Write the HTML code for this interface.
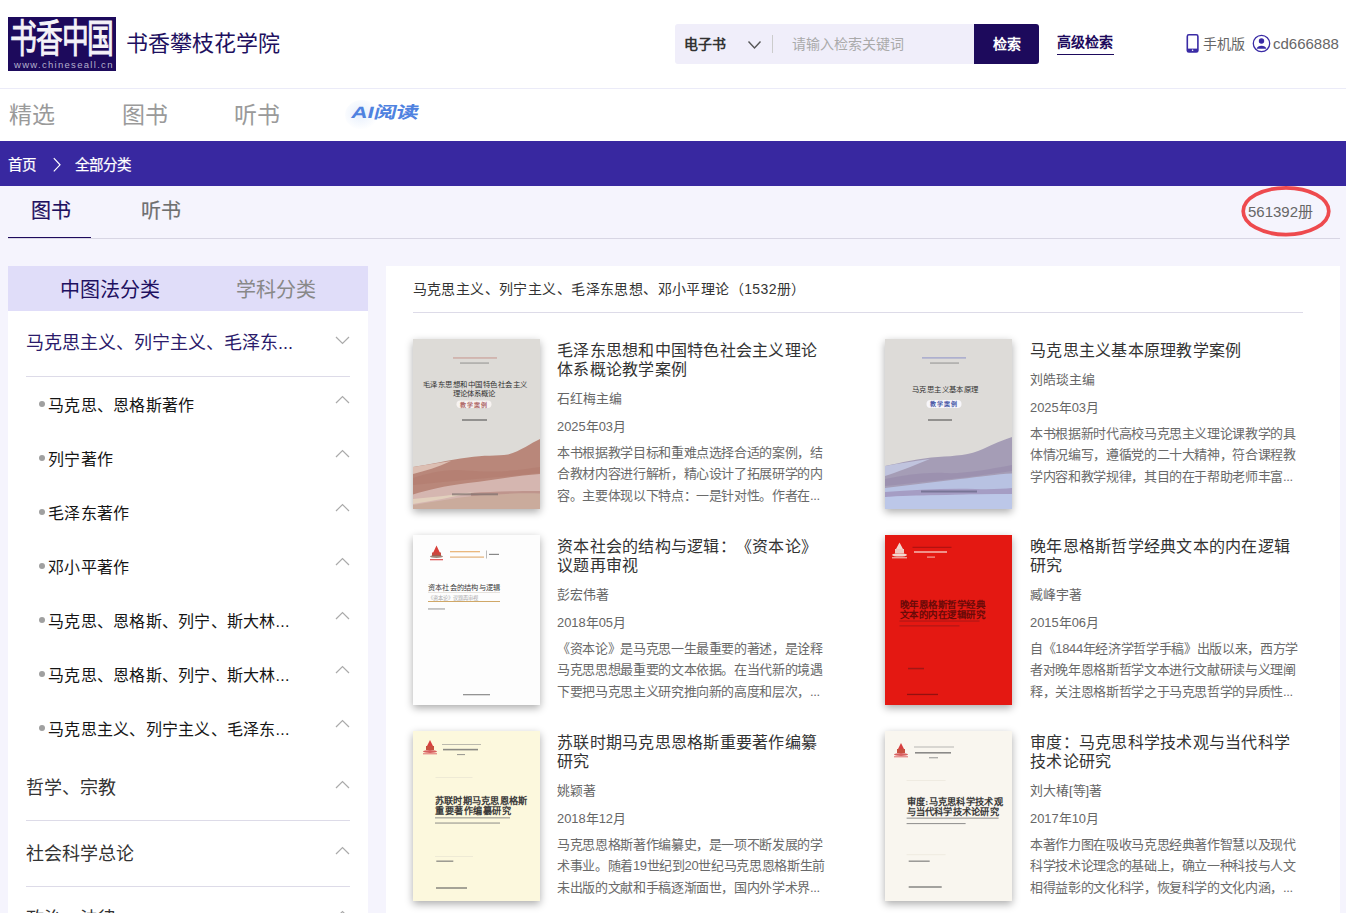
<!DOCTYPE html>
<html lang="zh-CN"><head><meta charset="utf-8">
<style>
*{margin:0;padding:0;box-sizing:border-box}
html,body{width:1346px;height:913px;overflow:hidden}
body{font-family:"Liberation Sans",sans-serif;background:#f5f4fd;position:relative;color:#333;text-spacing-trim:space-all}
.abs{position:absolute}
div{white-space:nowrap}
#hdr{position:absolute;left:0;top:0;width:1346px;height:141px;background:#fff}
#hdrline{position:absolute;left:0;top:88px;width:1346px;height:1px;background:#ebebf8}
#logo{position:absolute;left:8px;top:17px;width:108px;height:54px;background:#1d0a5c;overflow:hidden}
#logo .big{position:absolute;left:2px;top:0px;font-family:"Liberation Serif",serif;font-weight:normal;-webkit-text-stroke:0.7px #f4f2f8;color:#f4f2f8;font-size:26px;line-height:42px;letter-spacing:-1px;transform:translate(0,-7.2px) scale(1.03,1.47);transform-origin:0 0}
#logo .url{position:absolute;left:6px;top:42px;font-size:9.5px;line-height:11px;color:#b4b0cc;letter-spacing:1.3px}
#site{position:absolute;left:126px;top:30px;font-size:22px;line-height:28px;color:#1e1060;font-family:"Liberation Serif",serif}
#search{position:absolute;left:675px;top:24px;width:364px;height:40px;background:#f0eefa;border-radius:3px}
#sbtn{position:absolute;left:974px;top:24px;width:65px;height:40px;background:#1d0a5c;border-radius:0 3px 3px 0;color:#fff;font-size:14px;font-weight:bold;line-height:40px;text-align:center}
.s14{font-size:14px;line-height:18px}
#bar{position:absolute;left:0;top:141px;width:1346px;height:45px;background:#3828a0}
.crumb{position:absolute;top:156px;font-size:14.5px;line-height:18px;color:#fff;-webkit-text-stroke:0.25px #fff}
.nav{position:absolute;top:101px;font-size:23px;line-height:30px;color:#9a9a9a;font-family:"Liberation Serif",serif}
.tab{position:absolute;top:197px;font-size:20px;line-height:26px;font-family:"Liberation Serif",serif}
#side{position:absolute;left:8px;top:266px;width:360px;height:660px;background:#fff}
#sidehead{position:absolute;left:8px;top:266px;width:360px;height:45px;background:#e0ddf9}
#main{position:absolute;left:386px;top:266px;width:954px;height:660px;background:#fff}
.sh{position:absolute;top:277px;font-size:20px;line-height:26px}
.cat{position:absolute;left:26px;font-size:18px;line-height:24px;color:#333}
.sub{position:absolute;left:48px;margin-top:1.5px;font-size:16px;line-height:20px;color:#151515;letter-spacing:0.25px}
.dot{position:absolute;left:39px;width:6px;height:6px;border-radius:50%;background:#a0a0a0}
.chev{position:absolute;left:335px;width:15px;height:9px}
.div1{position:absolute;left:26px;width:324px;height:1px;background:#dddbe8}
.cover{position:absolute;width:127px;height:170px;box-shadow:0 3px 8px rgba(0,0,0,0.33);overflow:hidden}
.bt{position:absolute;font-size:16px;line-height:19px;color:#333;letter-spacing:0.25px}
.ba{position:absolute;font-size:12.9px;line-height:16px;color:#666}
.bd{position:absolute;font-size:13px;line-height:21.4px;color:#6a6a6a;letter-spacing:-0.35px}
</style></head><body>
<div id="hdr"></div>
<div id="hdrline"></div>
<div id="logo"><div class="big">书香中国</div><div class="url">www.chineseall.cn</div></div>
<div id="site">书香攀枝花学院</div>
<div id="search"></div>
<div class="abs s14" style="left:684px;top:35px;font-weight:bold;color:#333">电子书</div>
<svg class="abs" style="left:747px;top:40px" width="15" height="10" viewBox="0 0 15 10"><polyline points="1.5,1.5 7.5,8 13.5,1.5" fill="none" stroke="#555" stroke-width="1.4"/></svg>
<div class="abs" style="left:772px;top:35px;width:1px;height:18px;background:#ccc"></div>
<div class="abs s14" style="left:792px;top:35px;color:#aaa">请输入检索关键词</div>
<div id="sbtn">检索</div>
<div class="abs s14" style="left:1057px;top:33px;font-weight:bold;color:#1d0a5c">高级检索</div>
<div class="abs" style="left:1057px;top:54px;width:57px;height:1.3px;background:#1d0a5c"></div>
<svg class="abs" style="left:1186px;top:33px" width="13" height="21" viewBox="0 0 13 21"><rect x="1.3" y="1.8" width="10.6" height="17.2" rx="1.6" fill="none" stroke="#3a2ba5" stroke-width="1.6"/><rect x="1.3" y="15.6" width="10.6" height="3.4" fill="#3a2ba5"/><circle cx="6.6" cy="17.3" r="0.8" fill="#fff"/></svg>
<div class="abs s14" style="left:1203px;top:35px;color:#666">手机版</div>
<svg class="abs" style="left:1252px;top:34px" width="19" height="19" viewBox="0 0 19 19"><circle cx="9.5" cy="9.5" r="8.2" fill="none" stroke="#3a2ba5" stroke-width="1.3"/><circle cx="9.5" cy="7" r="2.7" fill="#3a2ba5"/><path d="M4.6,14.8 C5.2,10.6 13.8,10.6 14.4,14.8 Z" fill="#3a2ba5"/></svg>
<div class="abs" style="left:1273px;top:34px;font-size:15px;line-height:19px;color:#666">cd666888</div>

<div class="nav" style="left:9px">精选</div>
<div class="nav" style="left:122px">图书</div>
<div class="nav" style="left:234px">听书</div>
<div class="abs" style="left:345px;top:100px;width:34px;height:30px;border-radius:50%;background:radial-gradient(ellipse at 45% 45%,rgba(140,180,240,0.22),rgba(140,180,240,0) 70%)"></div>
<div class="abs" style="left:354px;top:100px;font-size:19px;line-height:24px;font-weight:bold;color:#4f82e0;transform:translate(0,3px) scale(1.19,0.86) skewX(-10deg);transform-origin:0 0">AI阅读</div>

<div id="bar"></div>
<div class="crumb" style="left:8px">首页</div>
<svg class="abs" style="left:52px;top:157px" width="10" height="16" viewBox="0 0 10 16"><polyline points="1.8,1.2 8,7.8 1.8,14.4" fill="none" stroke="#fff" stroke-width="1.2"/></svg>
<div class="crumb" style="left:75px">全部分类</div>

<div class="tab" style="left:31px;top:198px;color:#1e1060;-webkit-text-stroke:0.2px #1e1060">图书</div>
<div class="tab" style="left:141px;top:198px;color:#6f6f6f;-webkit-text-stroke:0.2px #6f6f6f">听书</div>
<div class="abs" style="left:8px;top:236.5px;width:83px;height:1.6px;background:#1e0a5c"></div>
<div class="abs" style="left:8px;top:238px;width:1332px;height:1px;background:#d8d6e4"></div>
<div class="abs" style="left:1248px;top:202px;font-size:15px;line-height:19px;color:#666">561392册</div>
<svg class="abs" style="left:1240px;top:185px" width="93" height="53" viewBox="0 0 93 53"><ellipse cx="46" cy="26.2" rx="42.8" ry="23.4" fill="none" stroke="#ee4a4e" stroke-width="3.7"/></svg>

<div id="side"></div>
<div id="sidehead"></div>
<div class="sh" style="left:60px;color:#1e1060">中图法分类</div>
<div class="sh" style="left:236px;color:#888">学科分类</div>
<div class="cat" style="top:331px;color:#2b1b6b">马克思主义、列宁主义、毛泽东...</div>
<svg class="chev" style="top:336px" width="15" height="9" viewBox="0 0 15 9"><polyline points="1,1 7.5,7.5 14,1" fill="none" stroke="#aaa" stroke-width="1.2"/></svg>
<div class="div1" style="top:376px"></div>
<div class="dot" style="top:401px"></div>
<div class="sub" style="top:394px">马克思、恩格斯著作</div>
<svg class="chev" style="top:395px" width="15" height="9" viewBox="0 0 15 9"><polyline points="1,8 7.5,1.5 14,8" fill="none" stroke="#aaa" stroke-width="1.2"/></svg>
<div class="dot" style="top:455px"></div>
<div class="sub" style="top:448px">列宁著作</div>
<svg class="chev" style="top:449px" width="15" height="9" viewBox="0 0 15 9"><polyline points="1,8 7.5,1.5 14,8" fill="none" stroke="#aaa" stroke-width="1.2"/></svg>
<div class="dot" style="top:509px"></div>
<div class="sub" style="top:502px">毛泽东著作</div>
<svg class="chev" style="top:503px" width="15" height="9" viewBox="0 0 15 9"><polyline points="1,8 7.5,1.5 14,8" fill="none" stroke="#aaa" stroke-width="1.2"/></svg>
<div class="dot" style="top:563px"></div>
<div class="sub" style="top:556px">邓小平著作</div>
<svg class="chev" style="top:557px" width="15" height="9" viewBox="0 0 15 9"><polyline points="1,8 7.5,1.5 14,8" fill="none" stroke="#aaa" stroke-width="1.2"/></svg>
<div class="dot" style="top:617px"></div>
<div class="sub" style="top:610px">马克思、恩格斯、列宁、斯大林...</div>
<svg class="chev" style="top:611px" width="15" height="9" viewBox="0 0 15 9"><polyline points="1,8 7.5,1.5 14,8" fill="none" stroke="#aaa" stroke-width="1.2"/></svg>
<div class="dot" style="top:671px"></div>
<div class="sub" style="top:664px">马克思、恩格斯、列宁、斯大林...</div>
<svg class="chev" style="top:665px" width="15" height="9" viewBox="0 0 15 9"><polyline points="1,8 7.5,1.5 14,8" fill="none" stroke="#aaa" stroke-width="1.2"/></svg>
<div class="dot" style="top:725px"></div>
<div class="sub" style="top:718px">马克思主义、列宁主义、毛泽东...</div>
<svg class="chev" style="top:719px" width="15" height="9" viewBox="0 0 15 9"><polyline points="1,8 7.5,1.5 14,8" fill="none" stroke="#aaa" stroke-width="1.2"/></svg>
<div class="cat" style="top:776px">哲学、宗教</div>
<svg class="chev" style="top:780px" width="15" height="9" viewBox="0 0 15 9"><polyline points="1,8 7.5,1.5 14,8" fill="none" stroke="#aaa" stroke-width="1.2"/></svg>
<div class="div1" style="top:820px"></div>
<div class="cat" style="top:842px">社会科学总论</div>
<svg class="chev" style="top:846px" width="15" height="9" viewBox="0 0 15 9"><polyline points="1,8 7.5,1.5 14,8" fill="none" stroke="#aaa" stroke-width="1.2"/></svg>
<div class="div1" style="top:886px"></div>
<div class="cat" style="top:907px">政治、法律</div>
<svg class="chev" style="top:910px" width="15" height="9" viewBox="0 0 15 9"><polyline points="1,8 7.5,1.5 14,8" fill="none" stroke="#aaa" stroke-width="1.2"/></svg>
<div class="div1" style="top:952px"></div>
<div id="main"></div>
<div class="abs" style="left:412.5px;top:280px;font-size:14px;line-height:18px;color:#333;letter-spacing:0.42px">马克思主义、列宁主义、毛泽东思想、邓小平理论（1532册）</div>
<div class="abs" style="left:413px;top:312px;width:890px;height:1px;background:#dddbe8"></div>
<div class="cover" style="left:413px;top:339px"><svg width="127" height="170" viewBox="0 0 127 170">
<rect width="127" height="170" fill="#dddbd7"/>
<rect x="40" y="18.3" width="44" height="1.3" fill="#c99c94" opacity="0.85"/>
<rect x="47" y="23.5" width="29" height="1.1" fill="#6a6a6a" opacity="0.6"/>
<text x="62" y="47.5" font-size="7.4" text-anchor="middle" fill="#303030" font-family="Liberation Serif" textLength="104">毛泽东思想和中国特色社会主义</text>
<text x="61" y="57.3" font-size="7.4" text-anchor="middle" fill="#303030" font-family="Liberation Serif">理论体系概论</text>
<rect x="43.5" y="61.5" width="35" height="7.5" rx="3.7" fill="#f7f3f1"/>
<text x="61" y="67.6" font-size="6" text-anchor="middle" fill="#b06c6c" font-family="Liberation Sans" font-weight="bold" letter-spacing="1.2">教学案例</text>
<rect x="49" y="80.3" width="25" height="1.4" fill="#444" opacity="0.7"/>
<path d="M0,128 C15,126 35,121 55,118.5 C70,116 85,117 95,115.5 C108,112 118,104 127,100 L127,170 L0,170 Z" fill="#b9877a"/>
<path d="M0,128 L0,135 C12,132 25,128 38,122 C25,124 12,126 0,128 Z" fill="#dcbfb3"/>
<path d="M0,139 C12,135 28,131 42,131 C60,131 75,136 127,128 L127,134 C90,138 60,140 0,146 Z" fill="#b37e70" opacity="0.7"/>
<path d="M0,155.5 C15,151 30,147 55,144 C80,141 100,137 127,135 L127,170 L0,170 Z" fill="#d5b6b0"/>
<path d="M0,160 C20,158 40,156 62,153 C40,158 20,162 0,165 Z" fill="#e2d0bd"/>
<path d="M58,154 C80,152.5 100,152 127,152 L127,156 C100,156 80,156 58,157.5 Z" fill="#bf958d"/>
<path d="M0,166 C20,163 40,159 60,157 C85,155 105,154 127,154.5 L127,170 L0,170 Z" fill="#caab9c"/>
<rect x="39" y="154.3" width="46" height="2" fill="#7d706e" opacity="0.7"/>
</svg></div>
<div class="abs" style="left:557px;top:341px"><div class="bt" style="position:static">毛泽东思想和中国特色社会主义理论<br>体系概论教学案例</div><div class="ba" style="position:static;line-height:28px;margin-top:5.5px">石红梅主编</div><div class="ba" style="position:static;line-height:28px">2025年03月</div><div class="bd" style="position:static;margin-top:1.3px">本书根据教学目标和重难点选择合适的案例，结<br>合教材内容进行解析，精心设计了拓展研学的内<br>容。主要体现以下特点：一是针对性。作者在...</div></div>
<div class="cover" style="left:885px;top:339px"><svg width="127" height="170" viewBox="0 0 127 170">
<rect width="127" height="170" fill="#dddbd8"/>
<rect x="37" y="18.3" width="44" height="1.2" fill="#8a8fc8" opacity="0.8"/>
<rect x="45" y="23.5" width="29" height="1.1" fill="#6a6a6a" opacity="0.6"/>
<text x="60" y="53" font-size="7.4" text-anchor="middle" fill="#303030" font-family="Liberation Serif" textLength="66">马克思主义基本原理</text>
<rect x="41.5" y="61" width="35" height="8" rx="4" fill="#f7f6fa"/>
<text x="59" y="67.4" font-size="6" text-anchor="middle" fill="#4a5aa8" font-family="Liberation Sans" font-weight="bold" letter-spacing="1.2">教学案例</text>
<rect x="43" y="80.3" width="24" height="1.4" fill="#444" opacity="0.7"/>
<path d="M0,127 C15,124 35,119 53,118 C70,117 85,116 98,110 C108,105 118,101 127,98 L127,170 L0,170 Z" fill="#a59db6"/>
<path d="M0,127 L0,137 C12,133 28,127 45,120 C30,122 15,124 0,127 Z" fill="#c0c4de"/>
<path d="M0,140 C20,136 40,133 60,134 C80,135 105,130 127,126 L127,132 C100,136 70,140 0,147 Z" fill="#9a8fae" opacity="0.8"/>
<path d="M0,149 C25,146 50,143 75,140 C95,138 112,135 127,134.5 L127,170 L0,170 Z" fill="#b8c2e2"/>
<path d="M0,153 C30,151 60,149 90,150 C105,150.5 118,150 127,149 L127,155 C100,155 60,156 0,158 Z" fill="#a59dc4"/>
<path d="M0,158 C30,156 70,156 127,155 L127,170 L0,170 Z" fill="#bcc7e8"/>
<rect x="36" y="151.5" width="56" height="2" fill="#5a5a7a" opacity="0.6"/>
</svg></div>
<div class="abs" style="left:1030px;top:341px"><div class="bt" style="position:static">马克思主义基本原理教学案例</div><div class="ba" style="position:static;line-height:28px;margin-top:5.5px">刘皓琰主编</div><div class="ba" style="position:static;line-height:28px">2025年03月</div><div class="bd" style="position:static;margin-top:1.3px">本书根据新时代高校马克思主义理论课教学的具<br>体情况编写，遵循党的二十大精神，符合课程教<br>学内容和教学规律，其目的在于帮助老师丰富...</div></div>
<div class="cover" style="left:413px;top:535px"><svg width="127" height="170" viewBox="0 0 127 170"><rect width="127" height="170" fill="#fdfdfd"/>
<path d="M23.5,10.5 L27,18 L20,18 Z" fill="#d8403a"/><rect x="19" y="17.5" width="9" height="3.5" fill="#c84a40"/><ellipse cx="23.5" cy="21.5" rx="6.5" ry="1.5" fill="#8a6a5a" opacity="0.8"/><rect x="17" y="24" width="13" height="1.3" fill="#e06060"/>
<rect x="37" y="16" width="30" height="1.3" fill="#e8b070" opacity="0.9"/><rect x="37" y="21.5" width="34" height="1.2" fill="#e0a868" opacity="0.9"/><rect x="73" y="15.5" width="0.8" height="8" fill="#aaa"/><rect x="76" y="18.8" width="10" height="1.2" fill="#888"/>
<text x="15" y="55" font-size="7.2" fill="#3a3a3a" font-family="Liberation Serif" textLength="72">资本社会的结构与逻辑</text>
<rect x="15" y="57" width="72" height="0.6" fill="#d8d0c8"/>
<text x="15" y="64.5" font-size="5.2" fill="#aaa" font-family="Liberation Serif" textLength="50">《资本论》议题再审视</text>
<rect x="15" y="66" width="72" height="1" fill="#d0a868"/>
<rect x="15" y="73.3" width="17" height="1.3" fill="#777" opacity="0.6"/>
<rect x="50" y="159" width="27" height="1.3" fill="#666" opacity="0.7"/>
</svg></div>
<div class="abs" style="left:557px;top:537px"><div class="bt" style="position:static">资本社会的结构与逻辑：《资本论》<br>议题再审视</div><div class="ba" style="position:static;line-height:28px;margin-top:5.5px">彭宏伟著</div><div class="ba" style="position:static;line-height:28px">2018年05月</div><div class="bd" style="position:static;margin-top:1.3px">《资本论》是马克思一生最重要的著述，是诠释<br>马克思思想最重要的文本依据。在当代新的境遇<br>下要把马克思主义研究推向新的高度和层次，...</div></div>
<div class="cover" style="left:885px;top:535px"><svg width="127" height="170" viewBox="0 0 127 170"><rect width="127" height="170" fill="#e41812"/>
<path d="M14.5,7.5 L18,14 L11,14 Z" fill="#f3d8d0"/><rect x="10" y="14" width="9" height="4.5" fill="#f0c8c0"/><ellipse cx="14.5" cy="20" rx="7.5" ry="1.6" fill="#f3d8d0"/><rect x="7" y="22.3" width="15" height="1" fill="#f3d8d0"/>
<rect x="27.5" y="11.8" width="39" height="1" fill="#9a1010" opacity="0.8"/><rect x="29" y="16.2" width="33" height="1.6" fill="#f5c0b8" opacity="0.9"/><rect x="42" y="21.5" width="8" height="1.2" fill="#f5c0b8" opacity="0.8"/>
<text x="14.5" y="73" font-size="9.5" fill="#6a0a08" font-family="Liberation Serif" font-weight="bold" textLength="86">晚年恩格斯哲学经典</text>
<text x="14.5" y="83" font-size="9.5" fill="#6a0a08" font-family="Liberation Serif" font-weight="bold" textLength="86">文本的内在逻辑研究</text>
<rect x="14.5" y="85.5" width="80" height="1.1" fill="#a01818" opacity="0.8"/><rect x="14.5" y="90.3" width="60" height="1.1" fill="#a01818" opacity="0.8"/>
<rect x="23" y="132.8" width="16" height="1.5" fill="#901818" opacity="0.8"/>
<rect x="22" y="158.8" width="31" height="1.3" fill="#801010" opacity="0.8"/>
</svg></div>
<div class="abs" style="left:1030px;top:537px"><div class="bt" style="position:static">晚年恩格斯哲学经典文本的内在逻辑<br>研究</div><div class="ba" style="position:static;line-height:28px;margin-top:5.5px">臧峰宇著</div><div class="ba" style="position:static;line-height:28px">2015年06月</div><div class="bd" style="position:static;margin-top:1.3px">自《1844年经济学哲学手稿》出版以来，西方学<br>者对晚年恩格斯哲学文本进行文献研读与义理阐<br>释，关注恩格斯哲学之于马克思哲学的异质性...</div></div>
<div class="cover" style="left:413px;top:731px"><svg width="127" height="170" viewBox="0 0 127 170"><rect width="127" height="170" fill="#fcf8dd"/>
<path d="M17,9 L20,15 L14,15 Z" fill="#d84040"/><rect x="13" y="15" width="8" height="4" fill="#c85040"/><ellipse cx="17" cy="20.5" rx="7" ry="1.4" fill="#d86060"/><rect x="10" y="22.3" width="14" height="1" fill="#e06a6a"/>
<rect x="29" y="13" width="39" height="0.8" fill="#888" opacity="0.7"/><rect x="30" y="17.8" width="35" height="1.6" fill="#666" opacity="0.75"/><rect x="44" y="23" width="8" height="1.1" fill="#777" opacity="0.7"/>
<rect x="22.5" y="46.3" width="37" height="0.5" fill="#e0dccc"/>
<text x="22" y="72.6" font-size="9.2" fill="#3a3a3a" font-family="Liberation Serif" font-weight="bold" textLength="92">苏联时期马克思恩格斯</text>
<text x="22" y="83.2" font-size="9.2" fill="#3a3a3a" font-family="Liberation Serif" font-weight="bold" textLength="76">重要著作编纂研究</text>
<rect x="22" y="86.3" width="75" height="1.1" fill="#777" opacity="0.75"/><rect x="22" y="91.5" width="65" height="1.1" fill="#777" opacity="0.75"/>
<rect x="22" y="125" width="38" height="0.5" fill="#e0dccc"/>
<rect x="23.3" y="129.5" width="17" height="1.4" fill="#666" opacity="0.7"/>
<rect x="23" y="156.3" width="31" height="1.4" fill="#555" opacity="0.75"/>
</svg></div>
<div class="abs" style="left:557px;top:733px"><div class="bt" style="position:static">苏联时期马克思恩格斯重要著作编纂<br>研究</div><div class="ba" style="position:static;line-height:28px;margin-top:5.5px">姚颖著</div><div class="ba" style="position:static;line-height:28px">2018年12月</div><div class="bd" style="position:static;margin-top:1.3px">马克思恩格斯著作编纂史，是一项不断发展的学<br>术事业。随着19世纪到20世纪马克思恩格斯生前<br>未出版的文献和手稿逐渐面世，国内外学术界...</div></div>
<div class="cover" style="left:885px;top:731px"><svg width="127" height="170" viewBox="0 0 127 170"><rect width="127" height="170" fill="#f9f6ef"/>
<path d="M16,12 L19,18 L13,18 Z" fill="#d84040"/><rect x="12" y="18" width="8" height="4" fill="#c85040"/><ellipse cx="16" cy="23.5" rx="7" ry="1.4" fill="#d86060"/><rect x="9" y="25.3" width="14" height="1" fill="#e06a6a"/>
<rect x="29" y="15.6" width="40" height="0.8" fill="#888" opacity="0.7"/><rect x="30" y="21" width="36" height="1.6" fill="#666" opacity="0.75"/><rect x="44" y="26.2" width="9" height="1.1" fill="#777" opacity="0.7"/>
<rect x="21.6" y="49" width="39" height="0.5" fill="#e5e0d2"/>
<text x="21.6" y="73.7" font-size="9.2" fill="#3a3a3a" font-family="Liberation Serif" font-weight="bold" textLength="96">审度:马克思科学技术观</text>
<text x="21.6" y="83.6" font-size="9.2" fill="#3a3a3a" font-family="Liberation Serif" font-weight="bold" textLength="92">与当代科学技术论研究</text>
<rect x="21.6" y="86.6" width="92" height="1.1" fill="#777" opacity="0.75"/><rect x="21.6" y="92" width="59" height="1.1" fill="#777" opacity="0.75"/>
<rect x="21.6" y="123.6" width="39" height="0.5" fill="#e5e0d2"/>
<rect x="23.7" y="129.5" width="21" height="1.4" fill="#666" opacity="0.7"/>
<rect x="23.7" y="155.3" width="33" height="1.4" fill="#555" opacity="0.75"/>
</svg></div>
<div class="abs" style="left:1030px;top:733px"><div class="bt" style="position:static">审度：马克思科学技术观与当代科学<br>技术论研究</div><div class="ba" style="position:static;line-height:28px;margin-top:5.5px">刘大椿[等]著</div><div class="ba" style="position:static;line-height:28px">2017年10月</div><div class="bd" style="position:static;margin-top:1.3px">本著作力图在吸收马克思经典著作智慧以及现代<br>科学技术论理念的基础上，确立一种科技与人文<br>相得益彰的文化科学，恢复科学的文化内涵，...</div></div>
</body></html>
